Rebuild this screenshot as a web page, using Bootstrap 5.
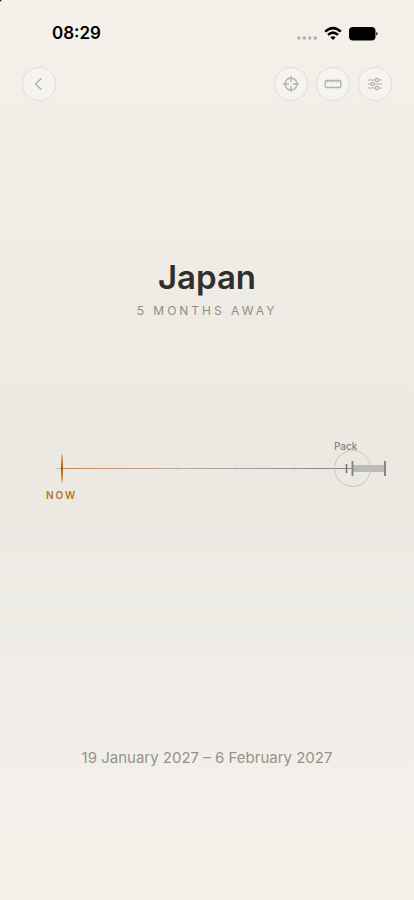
<!DOCTYPE html>
<html lang="en">
<head>
<meta charset="utf-8">
<meta name="viewport" content="width=device-width, initial-scale=1">
<title>Japan</title>
<link href="https://cdn.jsdelivr.net/npm/bootstrap@5.3.0/dist/css/bootstrap.min.css" rel="stylesheet">
<style>
  body {
    font-family: Inter, "Liberation Sans", sans-serif;
    color: #302f2c;
    background:
      radial-gradient(circle at 0 0, #222 1px, transparent 2px),
      linear-gradient(#f4f1eb 0, #f2efe9 12%, #ebe9e2 50%, #ebe9e2 56%, #f2efea 84%, #f4f1ea 100%);
  }
  .status-bar { padding: 20px 36px 20px 52px; }
  .status-time { font-size: 17px; line-height: 27px; color: #000; }
  .tool-row { padding: 0 22px; }
  .round-btn {
    width: 34px; height: 34px;
    color: #b3b0aa;
    background: #f6f4ef;
    border: 1px solid #e0ddd7;
  }
  .round-btn:hover { background: #fff; }
  .trip-head { padding-top: 154px; }
  .trip-title { font-size: 33px; line-height: 44px; }
  .trip-count { font-size: 12px; line-height: 24px; letter-spacing: 3px; color: #908d87; }
  .timeline { margin-top: 115px; }
  .timeline text { font-size: 10px; }
  .now-label { fill: #b87230; font-weight: 600; letter-spacing: 2px; }
  .pack-label { fill: #878580; font-weight: 500; }
  .trip-dates { font-size: 15px; line-height: 24px; color: #969289; padding: 234px 0 130px; }
</style>
</head>
<body class="d-flex flex-column min-vh-100">
<div class="status-bar d-flex justify-content-between align-items-center">
  <span class="status-time fw-semibold">08:29</span>
  <svg width="82" height="18" viewBox="0 0 82 18" role="img" aria-label="Wi-Fi on, battery full">
    <g fill="#b4b1ac"><circle cx="2.800" cy="13" r="1.800"/><circle cx="8.300" cy="13" r="1.800"/><circle cx="13.800" cy="13" r="1.800"/><circle cx="19.300" cy="13" r="1.800"/></g>
    <g fill="none" stroke="#000" stroke-width="2.500"><path d="M29.200 6.700Q37 -.4 44.800 6.700"/><path d="M32 9.900Q37 5.300 42 9.900"/></g>
    <path d="M34.300 12.300Q37 10 39.700 12.300L37 15Z"/>
    <rect x="53" y="2" width="26.500" height="13.500" rx="4"/><path d="M80.300 6.700Q83 8.700 80.300 10.700Z"/>
  </svg>
</div>
<nav class="tool-row d-flex align-items-center gap-2" aria-label="Trip tools">
  <button type="button" class="round-btn btn rounded-circle p-0 d-flex align-items-center justify-content-center me-auto" aria-label="Back">
    <svg width="18" height="18" viewBox="0 0 18 18" fill="none" stroke="currentColor" stroke-width="1.400" stroke-linecap="round" stroke-linejoin="round"><path d="M11 3.700L5.500 9l5.500 5.300"/></svg>
  </button>
  <button type="button" class="round-btn btn rounded-circle p-0 d-flex align-items-center justify-content-center" aria-label="Centre on now">
    <svg width="18" height="18" viewBox="0 0 18 18" fill="none" stroke="currentColor" stroke-width="1.300" stroke-linecap="round"><circle cx="9" cy="9" r="6"/><path d="M9 1.500v5M9 11.500v5M1.500 9h5M11.500 9h5"/></svg>
  </button>
  <button type="button" class="round-btn btn rounded-circle p-0 d-flex align-items-center justify-content-center" aria-label="Scale">
    <svg width="18" height="18" viewBox="0 0 18 18" fill="none" stroke="currentColor" stroke-width="1.300"><rect x="1.200" y="5.500" width="15.600" height="7" rx="1.300"/><path d="M3.500 6v2M5.700 6v1.500M7.900 6v2M10.100 6v1.500M12.300 6v2M14.500 6v1.500" stroke-width=".7"/></svg>
  </button>
  <button type="button" class="round-btn btn rounded-circle p-0 d-flex align-items-center justify-content-center" aria-label="Settings">
    <svg width="18" height="18" viewBox="0 0 18 18" fill="none" stroke="currentColor" stroke-width="1.200" stroke-linecap="round"><path d="M2.500 5H9.200M13 5h2.700M2.500 9h2.200M8.500 9h7.200M2.500 13H9.200M13 13h2.700"/><circle cx="11.100" cy="5" r="1.600"/><circle cx="6.600" cy="9" r="1.600"/><circle cx="11.100" cy="13" r="1.600"/></svg>
  </button>
</nav>
<main class="text-center">
  <header class="trip-head">
    <h1 class="trip-title fw-semibold mb-0">Japan</h1>
    <p class="trip-count mb-0">5 MONTHS AWAY</p>
  </header>
  <svg class="timeline d-block w-100" viewBox="0 0 414 74">
    <defs>
      <linearGradient id="axis" gradientUnits="userSpaceOnUse" x1="55" y1="0" x2="352" y2="0">
        <stop offset="0" stop-color="#c58a58" stop-opacity=".2"/><stop offset=".03" stop-color="#c08a62"/><stop offset=".4" stop-color="#c4a98f"/><stop offset=".55" stop-color="#aaa7a2"/><stop offset="1" stop-color="#85837f"/>
      </linearGradient>
      <linearGradient id="needle" x1="0" y1="0" x2="0" y2="1">
        <stop offset="0" stop-color="#c98a4c" stop-opacity=".35"/><stop offset=".3" stop-color="#bd7a3a"/><stop offset=".5" stop-color="#a85a16"/><stop offset=".7" stop-color="#bd7a3a"/><stop offset="1" stop-color="#c98a4c" stop-opacity=".35"/>
      </linearGradient>
    </defs>
    <rect x="55" y="30" width="297" height="1" fill="url(#axis)"/>
    <path d="M120 28v5M178 28v5M236 28v5M294 28v5" stroke="#bdb6aa" stroke-opacity=".3"/>
    <rect x="61" y="16" width="2" height="29" rx="1" fill="url(#needle)"/>
    <rect x="353" y="27" width="32" height="7" fill="#babab8"/>
    <path d="M346.500 26v9" stroke="#73716d" stroke-width="1.500"/>
    <path d="M352.500 23v15M385 23v15" stroke="#888889" stroke-width="2"/>
    <circle cx="352.500" cy="30.500" r="18" fill="none" stroke="#c9c6be"/>
    <text class="now-label" x="46" y="61">NOW</text>
    <text class="pack-label" x="334" y="12">Pack</text>
  </svg>
  <p class="trip-dates mb-0">19 January 2027 – 6 February 2027</p>
</main>
<script src="https://cdn.jsdelivr.net/npm/bootstrap@5.3.0/dist/js/bootstrap.bundle.min.js"></script>
</body>
</html>
